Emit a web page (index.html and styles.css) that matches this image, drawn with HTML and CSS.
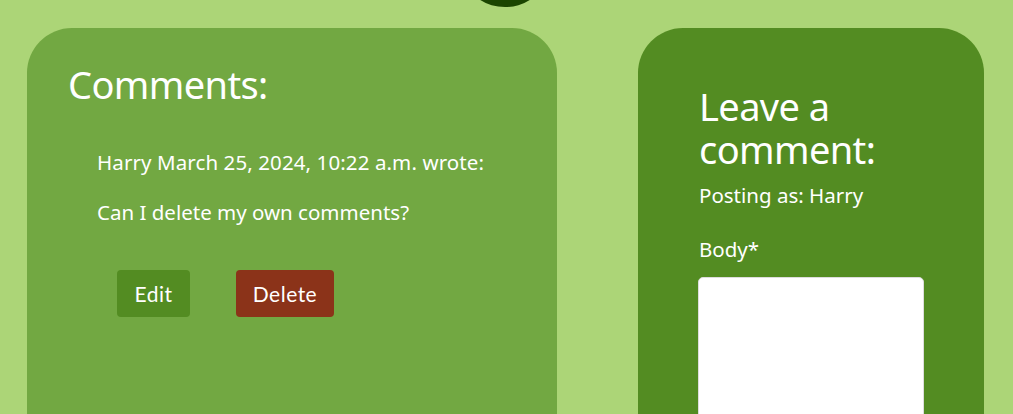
FILE: index.html
```html
<!DOCTYPE html>
<html lang="en">
<head>
<meta charset="utf-8">
<title>Comments</title>
<link rel="stylesheet" href="styles.css">
</head>
<body>
<div class="logo-dot"></div>
<main class="page">
  <section class="card comments">
    <h3 class="card-title">Comments:</h3>
    <div class="comment">
      <p class="meta">Harry March 25, 2024, 10:22 a.m. wrote:</p>
      <p class="body">Can I delete my own comments?</p>
      <div class="actions">
        <button class="btn btn-edit">Edit</button>
        <button class="btn btn-delete">Delete</button>
      </div>
    </div>
  </section>
  <section class="card form-card">
    <h3 class="card-title form-title">Leave a comment:</h3>
    <p class="posting">Posting as: Harry</p>
    <label class="label" for="body">Body*</label>
    <textarea id="body" class="textarea"></textarea>
  </section>
</main>
</body>
</html>
```

FILE: styles.css
```css
html, body {
  margin: 0;
  padding: 0;
}
body {
  background: #acd577;
  font-family: "Noto Sans", "DejaVu Sans", sans-serif;
  color: #ffffff;
  height: 414px;
  overflow: hidden;
  position: relative;
}
.logo-dot {
  position: absolute;
  left: 470px;
  top: -40px;
  width: 70px;
  height: 47px;
  border-radius: 50%;
  background: #1b4500;
}
.page {
  display: flex;
  align-items: flex-start;
  gap: 81px;
  padding: 28px 0 0 27px;
}
.card {
  border-radius: 45px 45px 0 0;
  height: 386px;
  box-sizing: border-box;
  overflow: hidden;
}
.comments {
  width: 530px;
  background: #72a842;
  padding: 35px 0 0 41px;
}
.form-card {
  width: 346px;
  background: #538c22;
  padding: 57px 0 0 61px;
}
.card-title {
  margin: 0;
  font-weight: 400;
  font-size: 38px;
  line-height: 43px;
  letter-spacing: -0.6px;
}
.form-title {
  width: 200px;
}
.comment {
  padding: 43px 0 0 29px;
}
.meta, .body, .posting {
  margin: 0;
  font-size: 20.5px;
  line-height: 26px;
}
.meta {
  letter-spacing: 0.1px;
}
.body {
  margin-top: 24px;
}
.actions {
  display: flex;
  gap: 46px;
  padding: 45px 0 0 20px;
}
.btn {
  border: none;
  border-radius: 4px;
  color: #ffffff;
  font-family: "Lato", sans-serif;
  font-size: 21px;
  letter-spacing: 0.5px;
  height: 47px;
  padding: 0;
  cursor: pointer;
}
.btn-edit {
  background: #538c22;
  width: 73px;
}
.btn-delete {
  background: #8b3319;
  width: 98px;
}
.posting {
  margin-top: 11px;
}
.label {
  display: block;
  margin-top: 28px;
  font-size: 20.5px;
  line-height: 26px;
}
.textarea {
  display: block;
  margin: 15px 0 0 -1px;
  width: 226px;
  height: 160px;
  border: 1px solid #dddddd;
  border-radius: 5px;
  background: #ffffff;
  box-sizing: border-box;
  resize: none;
}
```
